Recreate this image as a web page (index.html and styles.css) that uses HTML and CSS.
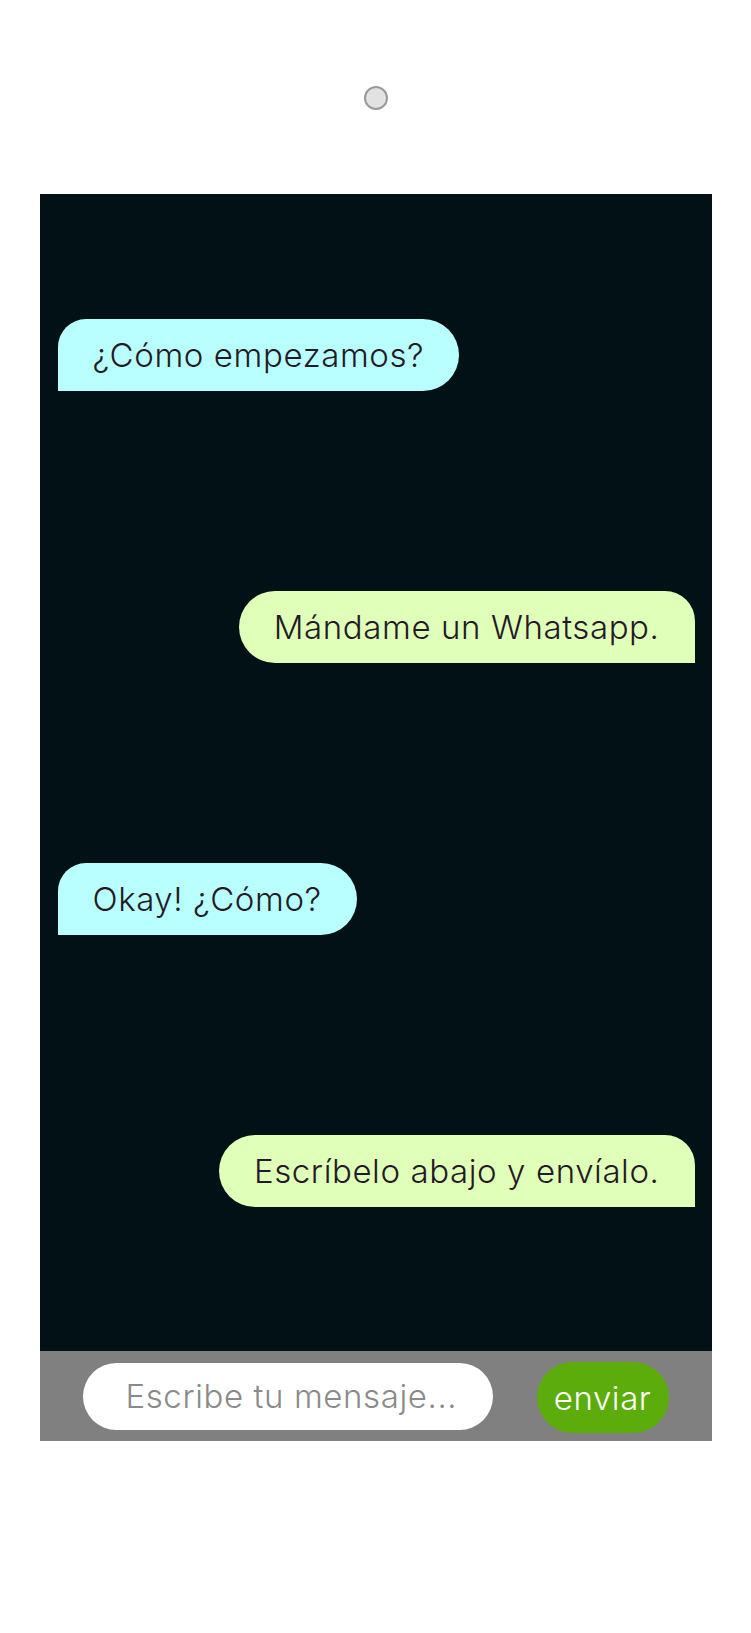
FILE: index.html
```html
<!DOCTYPE html>
<html lang="es">
<head>
<meta charset="utf-8">
<title>Chat</title>
<link rel="stylesheet" href="styles.css">
</head>
<body>
<div class="top">
  <div class="camera"></div>
</div>
<div class="phone">
  <div class="chat">
    <div class="msg left">¿Cómo empezamos?</div>
    <div class="msg right">Mándame un Whatsapp.</div>
    <div class="msg left">Okay! ¿Cómo?</div>
    <div class="msg right">Escríbelo abajo y envíalo.</div>
  </div>
  <div class="bar">
    <input class="field" type="text" placeholder="Escribe tu mensaje...">
    <button class="send">enviar</button>
  </div>
</div>
</body>
</html>
```

FILE: styles.css
```css
html, body {
  margin: 0;
  padding: 0;
  background: #ffffff;
}
body {
  font-family: Inter, "Noto Sans", sans-serif;
  font-weight: 300;
}
.top {
  height: 194px;
  display: flex;
  justify-content: center;
  padding-top: 86px;
  box-sizing: border-box;
}
.camera {
  width: 24px;
  height: 24px;
  box-sizing: border-box;
  border-radius: 50%;
  background: #e2e2e2;
  border: 2px solid #9a9a9a;
}
.phone {
  width: 672px;
  margin: 0 auto;
}
.chat {
  height: 1157px;
  box-sizing: border-box;
  background: #021115;
  padding: 125px 17px 0 18px;
  display: flex;
  flex-direction: column;
  gap: 200px;
}
.msg {
  height: 72px;
  line-height: 72px;
  font-size: 33px;
  letter-spacing: 0.6px;
  color: #231a26;
  padding: 0 35px;
  box-sizing: border-box;
  white-space: nowrap;
}
.msg.left {
  align-self: flex-start;
  background: #b9ffff;
  border-radius: 28px 36px 36px 0;
}
.msg.right {
  align-self: flex-end;
  background: #e0ffb8;
  border-radius: 36px 30px 0 36px;
}
.bar {
  height: 90px;
  background: #808080;
  display: flex;
  align-items: center;
  padding: 0 43px;
  gap: 44px;
}
.field {
  width: 410px;
  height: 67px;
  box-sizing: border-box;
  border: none;
  outline: none;
  border-radius: 34px;
  background: #ffffff;
  padding: 0 0 0 43px;
  font-family: Inter, "Noto Sans", sans-serif;
  font-weight: 300;
  font-size: 33px;
  letter-spacing: 0.6px;
  color: #333;
}
.field::placeholder {
  color: #8a8a8a;
}
.send {
  width: 132px;
  height: 71px;
  margin-top: 3px;
  border: none;
  border-radius: 36px;
  background: #5cad0b;
  color: #ffffff;
  font-family: Inter, "Noto Sans", sans-serif;
  font-weight: 300;
  font-size: 33px;
  letter-spacing: 0.6px;
  padding: 0;
}
```
